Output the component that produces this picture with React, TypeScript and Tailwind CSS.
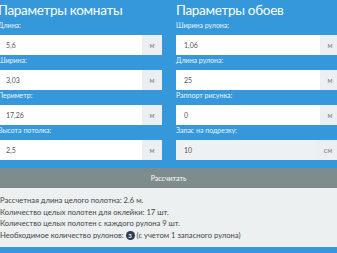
type Field = { label: string; value: string; unit: string; readOnly?: boolean };

const room: Field[] = [
  { label: "Длина:", value: "5,6", unit: "м" },
  { label: "Ширина:", value: "3,03", unit: "м" },
  { label: "Периметр:", value: "17,26", unit: "м" },
  { label: "Высота потолка:", value: "2,5", unit: "м" },
];

const wallpaper: Field[] = [
  { label: "Ширина рулона:", value: "1,06", unit: "м" },
  { label: "Длина рулона:", value: "25", unit: "м" },
  { label: "Раппорт рисунка:", value: "0", unit: "м" },
  { label: "Запас на подрезку:", value: "10", unit: "см", readOnly: true },
];

function Column({ title, fields }: { title: string; fields: Field[] }) {
  return (
    <div className="flex flex-col">
      <h2 className="text-[13.5px] leading-[20px] tracking-[-0.3px] text-white font-normal">{title}</h2>
      {fields.map((f) => (
        <div key={f.label} className="flex flex-col">
          <label className="text-[7px] leading-[10px] mb-[5px] text-white/90">{f.label}</label>
          <div className="flex h-[20px]">
            <div
              className={`flex-1 flex items-center pl-[8px] text-[7px] text-[#555] ${
                f.readOnly ? "bg-[#eef1f4]" : "bg-white"
              }`}
            >
              {f.value}
            </div>
            <div
              className={`flex items-center justify-center text-[7px] text-[#777] bg-[#eceff2] ${
                f.unit === "см" ? "w-[24px]" : "w-[20px]"
              }`}
            >
              {f.unit}
            </div>
          </div>
        </div>
      ))}
    </div>
  );
}

export default function App() {
  return (
    <div className="w-[337px] h-[253px] overflow-hidden bg-[#3498db] font-['Lato',sans-serif]">
      <div className="ml-[-2px] w-[342px] grid grid-cols-2 gap-x-[14px]">
        <Column title="Параметры комнаты" fields={room} />
        <Column title="Параметры обоев" fields={wallpaper} />
      </div>
      <div className="mt-[8px] h-[20px] bg-[#7f8c8d] flex items-center justify-center text-white text-[7px]">
        Рассчитать
      </div>
      <div className="h-[59px] bg-[#ecf0f1] pt-[7px] text-[7.6px] leading-[11.6px] text-[#444]">
        <p>Рассчетная длина целого полотна: 2.6 м.</p>
        <p>Количество целых полотен для оклейки: 17 шт.</p>
        <p>Количество целых полотен с каждого рулона 9 шт.</p>
        <p className="flex items-center">
          Необходимое количество рулонов:
          <span className="mx-[2px] inline-flex items-center justify-center w-[9px] h-[9px] rounded-full bg-[#2c3e50] text-white text-[6px] font-bold">
            3
          </span>
          (с учетом 1 запасного рулона)
        </p>
      </div>
    </div>
  );
}
